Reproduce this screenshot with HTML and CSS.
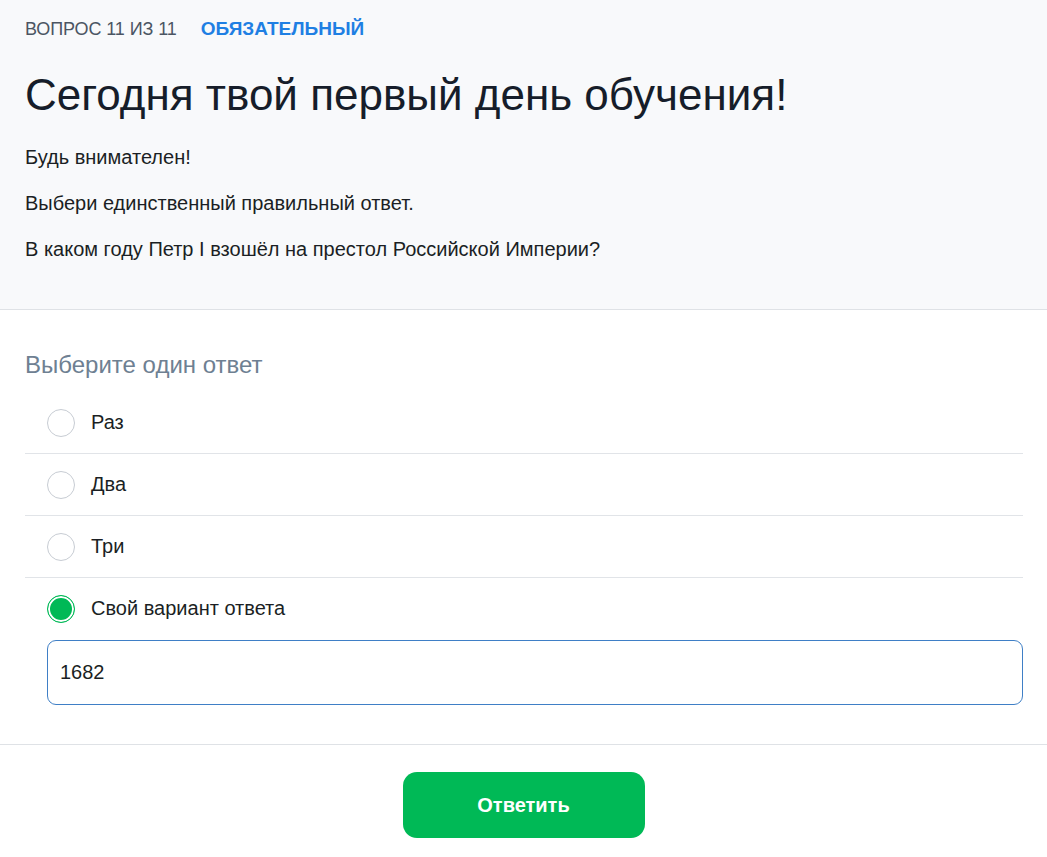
FILE: index.html
```html
<!DOCTYPE html>
<html lang="ru">
<head>
    <meta charset="UTF-8">
    <meta name="viewport" content="width=device-width, initial-scale=1.0">
    <title>Вопрос 11 из 11</title>
    <link rel="stylesheet" href="styles.css">
</head>
<body>
    <div class="question">
        <div class="meta">
            <span class="counter">ВОПРОС 11 ИЗ 11</span>
            <span class="required">ОБЯЗАТЕЛЬНЫЙ</span>
        </div>
        <h1>Сегодня твой первый день обучения!</h1>
        <p>Будь внимателен!</p>
        <p>Выбери единственный правильный ответ.</p>
        <p>В каком году Петр I взошёл на престол Российской Империи?</p>
    </div>

    <div class="answers">
        <div class="hint">Выберите один ответ</div>
        <label class="option">
            <span class="radio"></span>
            <span>Раз</span>
        </label>
        <label class="option">
            <span class="radio"></span>
            <span>Два</span>
        </label>
        <label class="option">
            <span class="radio"></span>
            <span>Три</span>
        </label>
        <label class="option last">
            <span class="radio checked"></span>
            <span>Свой вариант ответа</span>
        </label>
        <div class="custom">
            <input type="text" value="1682">
        </div>
    </div>

    <div class="footer">
        <button class="submit">Ответить</button>
    </div>
</body>
</html>
```

FILE: styles.css
```css
body {
    margin: 0;
    font-family: "Liberation Sans", Arial, sans-serif;
    color: #1b1f24;
    background: #fff;
}

.question {
    background-color: #f8f9fb;
    border-bottom: 1px solid #dfe2e6;
    padding: 18px 25px 48px;
}

.meta {
    font-size: 18px;
    line-height: 22px;
}

.counter {
    color: #4b5563;
    margin-right: 19px;
    letter-spacing: -0.1px;
}

.required {
    color: #1f7fe3;
    font-weight: bold;
    font-size: 19px;
}

h1 {
    margin: 29px 0 24px;
    font-size: 44px;
    font-weight: normal;
    line-height: 52px;
    color: #161d2a;
}

.question p {
    margin: 0 0 22px;
    font-size: 20px;
    line-height: 24px;
}

.question p:last-child {
    margin-bottom: 0;
}

.answers {
    padding: 40px 24px 39px 25px;
    border-bottom: 1px solid #dfe2e6;
}

.hint {
    font-size: 24px;
    line-height: 30px;
    color: #6e8092;
    margin-bottom: 12px;
}

.option {
    display: flex;
    align-items: center;
    gap: 16px;
    height: 61px;
    padding-left: 22px;
    border-bottom: 1px solid #e1e4e8;
    font-size: 20px;
    cursor: pointer;
}

.option.last {
    border-bottom: none;
}

.radio {
    width: 28px;
    height: 28px;
    border: 1px solid #c7ccd3;
    border-radius: 50%;
    background: #fff;
    box-sizing: border-box;
}

.radio.checked {
    border: 1px solid #00b956;
    background: #00b956;
    box-shadow: inset 0 0 0 2px #fff;
}

.custom {
    padding: 1px 0 0 22px;
}

.custom input {
    display: block;
    width: 100%;
    height: 65px;
    box-sizing: border-box;
    border: 1px solid #3f7fc6;
    border-radius: 9px;
    padding: 0 12px;
    font-family: inherit;
    font-size: 20px;
    color: #1b1f24;
    outline: none;
}

.footer {
    display: flex;
    justify-content: center;
    padding: 27px 0;
}

.submit {
    width: 242px;
    height: 66px;
    border: none;
    border-radius: 14px;
    background-color: #00b956;
    color: #fff;
    font-family: inherit;
    font-size: 20px;
    font-weight: bold;
    cursor: pointer;
}
```
